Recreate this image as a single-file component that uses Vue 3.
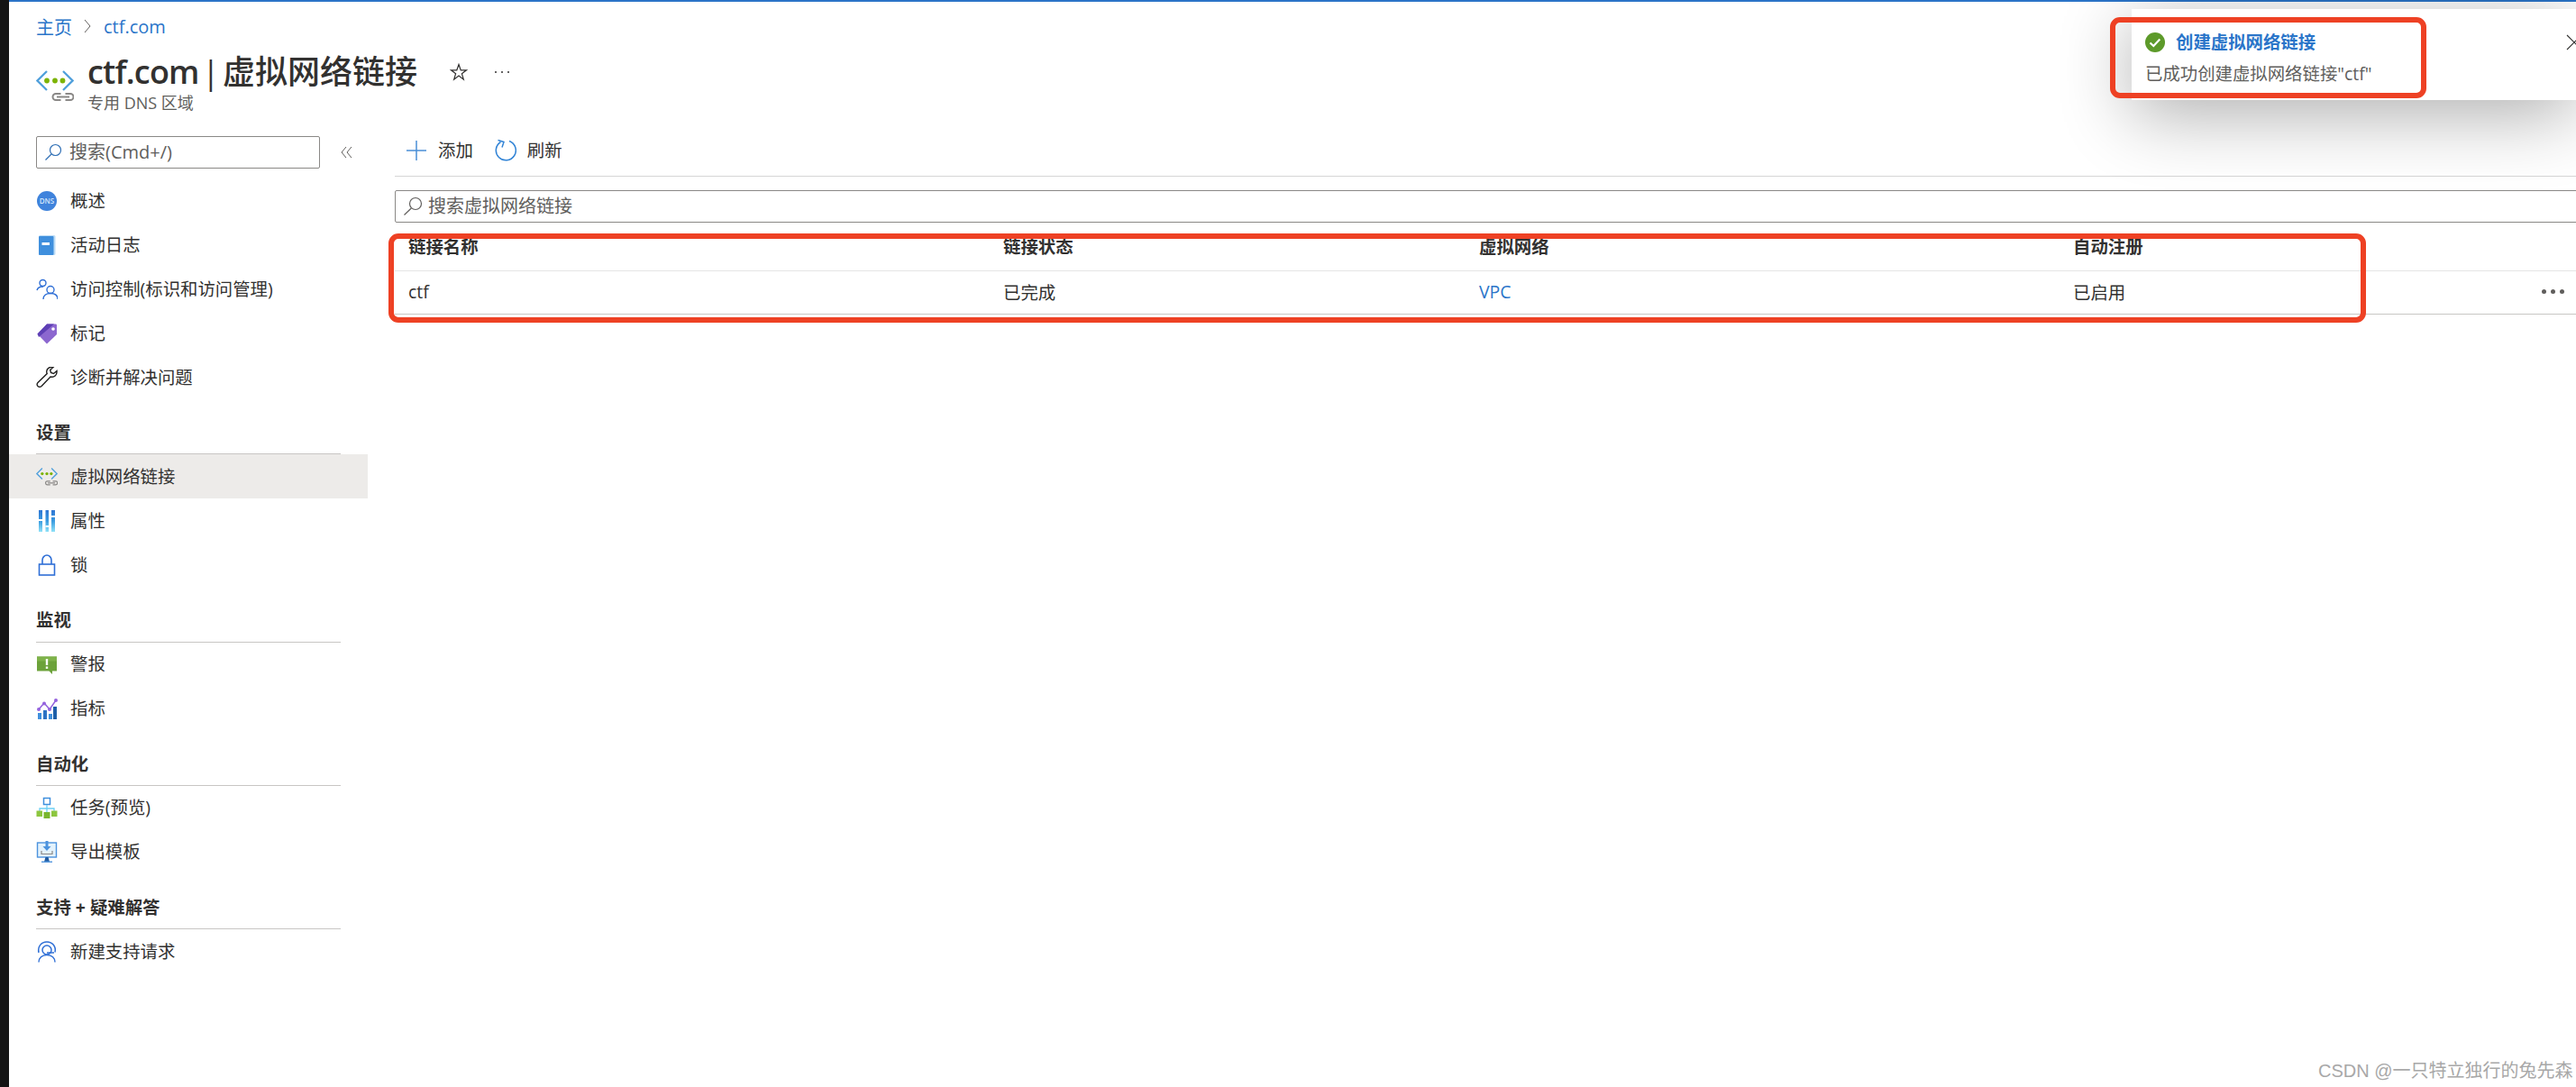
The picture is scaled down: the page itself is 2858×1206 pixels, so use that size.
<script setup>
const columns = ['链接名称', '链接状态', '虚拟网络', '自动注册']
</script>

<template>
  <div class="page">
    <div class="strip"></div>
    <div class="main">
      <div class="topbar"></div>
      <header class="header">
        <nav class="crumbs">
          <a class="link">主页</a>
          <svg class="crumb-sep" viewBox="0 0 10 20" width="10" height="20"><path d="M2 3l6 7-6 7" fill="none" stroke="#605e5c" stroke-width="1"/></svg>
          <a class="link">ctf.com</a>
        </nav>
        <div class="title-row">
          <svg class="title-icon" viewBox="0 0 42 35" width="42" height="35">
            <path d="M12 1L1.500 11.500 12 22" fill="none" stroke="#50a0dc" stroke-width="2.300"/>
            <path d="M30 1l10.500 10.500L30 22" fill="none" stroke="#50a0dc" stroke-width="2.300"/>
            <circle cx="12" cy="11.500" r="2.900" fill="#7cb305"/><circle cx="21" cy="11.500" r="2.900" fill="#7cb305"/><circle cx="29.500" cy="11.500" r="2.900" fill="#7cb305"/>
            <path d="M27.500 26h-5.500a3.500 3.500 0 0 0 0 7h5.500M32.500 26h5.500a3.500 3.500 0 0 1 0 7h-5.500M23 29.500h14" fill="none" stroke="#8a8886" stroke-width="2"/>
          </svg>
          <div class="title-text">
            <div class="title-line">
              <h1 class="title"><span class="title-en">ctf.com</span> | 虚拟网络链接</h1>
              <svg class="star" viewBox="0 0 20 20" width="20" height="20"><path d="M10 1.5l2.200 6.300h6.300l-5.100 3.900 1.900 6.500L10 14l-5.300 4.200 1.900-6.500-5.100-3.900h6.300z" fill="none" stroke="#323130" stroke-width="1.200"/></svg>
              <span class="more-top"><i></i><i></i><i></i></span>
            </div>
            <div class="subtitle">专用 DNS 区域</div>
          </div>
        </div>
      </header>

      <div class="body">
        <aside class="sidebar">
          <div class="side-search-row">
            <div class="search side-search">
              <svg class="search-icon" viewBox="0 0 20 20" width="20" height="20"><circle cx="12.500" cy="7.500" r="6" fill="none" stroke="#2f6fb5" stroke-width="1.200"/><path d="M8 12L1.500 18.500" stroke="#2f6fb5" stroke-width="1.200"/></svg>
              <span>搜索(Cmd+/)</span>
            </div>
            <svg class="collapse" viewBox="0 0 13 14" width="13" height="14"><path d="M6 1L1 7l5 6M12 1L7 7l5 6" fill="none" stroke="#605e5c" stroke-width="1"/></svg>
          </div>

          <ul class="nav">
            <li class="item">
              <svg class="ico" viewBox="0 0 24 24"><circle cx="12" cy="12" r="11" fill="#3f83dc"/><text x="12" y="15" text-anchor="middle" class="dns">DNS</text></svg>
              <span>概述</span>
            </li>
            <li class="item">
              <svg class="ico" viewBox="0 0 24 24"><rect x="3" y="1" width="18.500" height="22" rx="1.500" fill="#bcdcf5"/><rect x="3" y="2" width="16.500" height="21" rx="1" fill="#3f8fdd"/><rect x="6.500" y="9" width="8.500" height="3" fill="#fff"/></svg>
              <span>活动日志</span>
            </li>
            <li class="item">
              <svg class="ico" viewBox="0 0 24 24" fill="none" stroke="#2f6fd6" stroke-width="1.400"><circle cx="7.500" cy="5" r="3.500"/><path d="M1 13c.8-2.800 3.300-4.300 7-4"/><circle cx="16" cy="12.500" r="4"/><path d="M8 23c0-4.500 3.500-6.500 8-6.500s8 2 8 6.500"/></svg>
              <span>访问控制(标识和访问管理)</span>
            </li>
            <li class="item">
              <svg class="ico" viewBox="0 0 24 24"><path d="M12 1.500h9.500c1 0 1.500.5 1.500 1.500v10L12 23.500 1.500 12.500z" fill="#8c67cf"/><path d="M12 1.500h8L3 16l-1.500-3.500z" fill="#5e3fb5"/><circle cx="19" cy="7" r="1.800" fill="#fff"/></svg>
              <span>标记</span>
            </li>
            <li class="item">
              <svg class="ico" viewBox="0 0 24 24"><path d="M23 4.500l-3.500 3-3-1-.8-3 3.300-3c-3.500-.8-7 .8-7.300 4.500 0 1 .2 1.800.5 2.500L2 17.500c-1.200 1.200-1.200 3 0 4s2.800 1 4 0L16 11c4.500 1 7.500-2 7-6.500z" fill="none" stroke="#201f1e" stroke-width="1.400"/></svg>
              <span>诊断并解决问题</span>
            </li>
          </ul>

          <h2 class="group">设置</h2>
          <ul class="nav">
            <li class="item active">
              <svg class="ico" viewBox="0 0 42 35">
                <path d="M12 1L1.500 11.500 12 22" fill="none" stroke="#50a0dc" stroke-width="2.400"/>
                <path d="M30 1l10.500 10.500L30 22" fill="none" stroke="#50a0dc" stroke-width="2.400"/>
                <circle cx="12" cy="11.500" r="2.900" fill="#7cb305"/><circle cx="21" cy="11.500" r="2.900" fill="#7cb305"/><circle cx="29.500" cy="11.500" r="2.900" fill="#7cb305"/>
                <path d="M27.500 26h-5.500a3.500 3.500 0 0 0 0 7h5.500M32.500 26h5.500a3.500 3.500 0 0 1 0 7h-5.500M23 29.500h14" fill="none" stroke="#8a8886" stroke-width="2"/>
              </svg>
              <span>虚拟网络链接</span>
            </li>
            <li class="item">
              <svg class="ico" viewBox="0 0 24 24">
                <defs><linearGradient id="bar" x1="0" y1="0" x2="0" y2="1"><stop offset="0" stop-color="#2f76d4"/><stop offset=".5" stop-color="#3a9be0"/><stop offset="1" stop-color="#8fe2f8"/></linearGradient></defs>
                <rect x="3" y="0" width="4" height="24" fill="url(#bar)"/>
                <rect x="10.500" y="0" width="3.500" height="24" fill="url(#bar)"/>
                <rect x="17" y="0" width="4" height="24" fill="url(#bar)"/>
                <rect x="3" y="10" width="4" height="2" fill="#fff"/><rect x="10.500" y="17" width="3.500" height="2" fill="#fff"/><rect x="17" y="6" width="4" height="2" fill="#fff"/>
              </svg>
              <span>属性</span>
            </li>
            <li class="item">
              <svg class="ico" viewBox="0 0 24 24" fill="none" stroke="#2f6fd6" stroke-width="1.600"><rect x="3.500" y="11" width="17" height="12" fill="#fff"/><path d="M7 11V6.500a5 5.500 0 0 1 10 0V11"/></svg>
              <span>锁</span>
            </li>
          </ul>

          <h2 class="group">监视</h2>
          <ul class="nav">
            <li class="item">
              <svg class="ico" viewBox="0 0 24 24"><path d="M1 3.500h22v16h-5v3.500l-3.500-3.500H1z" fill="#6ca23a"/><rect x="1" y="3.500" width="22" height="5" fill="#7eb24a"/><rect x="10.800" y="6" width="2.400" height="7" fill="#fff"/><rect x="10.800" y="14.500" width="2.400" height="2.400" fill="#fff"/></svg>
              <span>警报</span>
            </li>
            <li class="item">
              <svg class="ico" viewBox="0 0 24 24">
                <rect x="2" y="17" width="4" height="7" fill="#3f8fdd"/><rect x="8" y="14" width="4" height="10" fill="#2d72c4"/><rect x="14" y="18" width="4" height="6" fill="#3f8fdd"/><rect x="19" y="10" width="4" height="14" fill="#1e5fa8"/>
                <path d="M3 13l6-7 6 7 7-10" fill="none" stroke="#9564de" stroke-width="1.500"/>
                <circle cx="3" cy="13" r="2" fill="#9564de"/><circle cx="9" cy="6.500" r="2" fill="#9564de"/><circle cx="15" cy="13" r="2" fill="#9564de"/><circle cx="22" cy="3" r="2" fill="#9564de"/>
              </svg>
              <span>指标</span>
            </li>
          </ul>

          <h2 class="group">自动化</h2>
          <ul class="nav">
            <li class="item">
              <svg class="ico" viewBox="0 0 24 24">
                <rect x="8.500" y="1.500" width="7" height="7" fill="#fff" stroke="#3f8fdd" stroke-width="1.500"/>
                <path d="M12 9v9M4 17v-4h16v4" fill="none" stroke="#6dd0f5" stroke-width="1.300"/>
                <rect x="0.500" y="15.500" width="6.500" height="6.500" fill="#8dc63f"/><rect x="8.500" y="17" width="7" height="7" fill="#7ab62e"/><rect x="17" y="15.500" width="6.500" height="6.500" fill="#8dc63f"/>
              </svg>
              <span>任务(预览)</span>
            </li>
            <li class="item">
              <svg class="ico" viewBox="0 0 24 24">
                <rect x="1.500" y="2" width="21" height="16" fill="#e3f2fc" stroke="#4c93de" stroke-width="1.400"/>
                <path d="M9 23l1.500-5h3l1.500 5z" fill="#1f5aa0"/><rect x="6" y="22.500" width="12" height="1.500" fill="#5b9be0"/>
                <path d="M10.500 0h3v6h3L12 11 7.500 6h3z" fill="#4c93de"/><path d="M6 11v3.500h12V11" fill="none" stroke="#8a8886" stroke-width="1.200"/>
              </svg>
              <span>导出模板</span>
            </li>
          </ul>

          <h2 class="group">支持 + 疑难解答</h2>
          <ul class="nav">
            <li class="item">
              <svg class="ico" viewBox="0 0 24 24" fill="none" stroke="#2f6fd6" stroke-width="1.500"><path d="M3 13C1.500 6 6 1 12 1s10.500 5 9 11.500"/><circle cx="12" cy="10" r="5"/><path d="M12 13h8"/><path d="M3 23.500c0-4.500 3.500-8 9-8s9 3.500 9 8"/></svg>
              <span>新建支持请求</span>
            </li>
          </ul>
        </aside>

        <section class="content">
          <div class="toolbar">
            <button class="tool">
              <svg viewBox="0 0 24 24" width="24" height="24"><path d="M12 1v22M1 12h22" stroke="#4a8fd6" stroke-width="1.500" fill="none"/></svg>
              <span>添加</span>
            </button>
            <button class="tool">
              <svg viewBox="0 0 24 26" width="24" height="26"><path d="M16 2.500A11 11 0 1 1 6.500 3.500" fill="none" stroke="#3284d6" stroke-width="1.500"/><path d="M3.500 1.500L10 3.500 8 9.500" fill="none" stroke="#3284d6" stroke-width="1.500"/></svg>
              <span>刷新</span>
            </button>
          </div>
          <div class="search table-search">
            <svg class="search-icon" viewBox="0 0 22 22" width="22" height="22"><circle cx="14" cy="8" r="6.500" fill="none" stroke="#605e5c" stroke-width="1.200"/><path d="M9.300 13L1.500 20.500" stroke="#605e5c" stroke-width="1.200"/></svg>
            <span>搜索虚拟网络链接</span>
          </div>
          <div class="table">
            <div class="t-row t-head">
              <span v-for="c in columns" :key="c">{{ c }}</span>
            </div>
            <div class="t-row t-body">
              <span>ctf</span><span>已完成</span><a class="link">VPC</a><span>已启用</span>
              <span class="row-more"><i></i><i></i><i></i></span>
            </div>
            <div class="mark mark-table"></div>
          </div>
        </section>
      </div>
    </div>

    <aside class="toast">
      <div class="toast-title">
        <svg viewBox="0 0 22 22" width="22" height="22"><circle cx="11" cy="11" r="11" fill="#5d9a2a"/><path d="M5.500 11.500l3.800 3.500 7-7.500" fill="none" stroke="#fff" stroke-width="2.200"/></svg>
        <strong>创建虚拟网络链接</strong>
      </div>
      <p class="toast-msg">已成功创建虚拟网络链接"ctf"</p>
      <svg class="toast-close" viewBox="0 0 18 18" width="18" height="18"><path d="M1 1l16 16M17 1L1 17" stroke="#323130" stroke-width="1.100"/></svg>
      <div class="mark mark-toast"></div>
    </aside>

    <div class="watermark">CSDN @一只特立独行的兔先森</div>
  </div>
</template>

<style scoped>
.page {
  position: relative;
  display: flex;
  width: 2858px;
  height: 1206px;
  overflow: hidden;
  background: #fff;
  color: #323130;
  font-family: "Open Sans", "Noto Sans CJK SC", sans-serif;
  font-size: 19.4px;
}
.strip { width: 10px; background: #141414; flex: none; }
.main { flex: 1; min-width: 0; display: flex; flex-direction: column; }
.topbar { height: 2px; background: #2b74c8; flex: none; }
.link { color: #2a75c9; }
.header { height: 149px; padding-left: 30px; box-sizing: border-box; flex: none; }
.crumbs { height: 28px; margin-top: 13px; display: flex; align-items: center; font-size: 20px; }
.crumb-sep { margin: 0 13px 0 12px; }
.title-row { display: flex; margin-top: 15px; }
.title-icon { margin-top: 20px; flex: none; }
.title-text { margin-left: 15px; }
.title-line { display: flex; align-items: center; height: 44px; }
.title { margin: 0; font-size: 36px; line-height: 44px; font-weight: 500; word-spacing: -6px; color: #323130; white-space: nowrap; }
.title-en { font-weight: 600; letter-spacing: -0.8px; }
.star { margin-left: 36px; }
.more-top { display: flex; gap: 5px; margin-left: 30px; }
.more-top i { width: 2px; height: 2px; background: #323130; border-radius: 50%; }
.subtitle { font-size: 18px; line-height: 24px; color: #605e5c; }
.body { flex: 1; display: flex; min-height: 0; }
.sidebar { width: 398px; flex: none; }
.side-search-row { display: flex; align-items: center; padding-left: 30px; height: 36px; }
.search {
  display: flex;
  align-items: center;
  box-sizing: border-box;
  height: 36px;
  border: 1px solid #8a8886;
  border-radius: 2px;
  color: #605e5c;
  font-size: 20px;
}
.search span { margin-top: -3px; }
.side-search { width: 315px; padding-left: 8px; gap: 8px; }
.collapse { margin-left: 23px; }
.nav { list-style: none; margin: 0; padding: 0; }
.nav:first-of-type { margin-top: 11px; }
.item { height: 49px; display: flex; align-items: center; padding-left: 30px; gap: 14px; }
.item span { margin-top: -3px; }
.item.active { background: #edebe9; }
.ico { width: 24px; height: 24px; flex: none; }
.dns { font: 600 8px "Open Sans", sans-serif; fill: #cfe4fa; }
.group {
  margin: 0 30px;
  height: 61.3px;
  box-sizing: border-box;
  padding-top: 23px;
  border-bottom: 1px solid #c8c6c4;
  font-size: 19.4px;
  line-height: 27px;
  font-weight: 700;
  color: #323130;
}
.content { flex: 1; min-width: 0; padding-left: 30px; }
.toolbar { height: 45px; box-sizing: border-box; border-bottom: 1px solid #d6d6d6; display: flex; align-items: flex-start; padding: 4px 0 0 12px; gap: 24px; }
.tool { display: flex; align-items: center; gap: 12px; height: 24px; background: none; border: 0; padding: 0; font: inherit; color: #323130; }
.tool span { margin-top: -3px; }
.table-search { margin-top: 15px; margin-right: -4px; padding-left: 8px; gap: 6px; }
.table { position: relative; }
.t-row { display: grid; grid-template-columns: 660px 528px 659px 1fr; padding-left: 15px; align-items: center; position: relative; box-sizing: border-box; }
.t-head { height: 54px; padding-bottom: 2px; border-bottom: 1px solid #e5e5e5; font-weight: 700; }
.t-body { height: 48px; padding-bottom: 3px; border-bottom: 1px solid #c8c6c4; }
.row-more { position: absolute; right: 13px; top: 20px; display: flex; gap: 5px; }
.row-more i { width: 5px; height: 5px; background: #605e5c; border-radius: 50%; }
.mark { position: absolute; box-sizing: border-box; border: 6px solid #ee4124; border-radius: 11px; pointer-events: none; }
.mark-table { left: -7px; top: 12px; width: 2194px; height: 99px; }
.toast {
  position: absolute;
  top: 10px;
  left: 2365px;
  width: 493px;
  height: 101px;
  box-sizing: border-box;
  background: #fff;
  box-shadow: 0 16px 80px rgba(0, 0, 0, .32);
  padding: 26px 0 0 15px;
}
.toast-title { display: flex; align-items: center; gap: 12px; height: 22px; color: #2a75c9; }
.toast-title strong { font-weight: 700; margin-top: -3px; }
.toast-msg { margin: 10px 0 0 0; color: #605e5c; line-height: 28px; }
.toast-close { position: absolute; left: 482px; top: 28px; }
.mark-toast { left: -24px; top: 9px; width: 351px; height: 90px; }
.watermark {
  position: absolute;
  left: 2572px;
  top: 1176px;
  font-family: "Liberation Sans", "Noto Sans CJK SC", sans-serif;
  font-size: 20px;
  line-height: 24px;
  color: #a8a8a8;
  white-space: nowrap;
}
</style>
